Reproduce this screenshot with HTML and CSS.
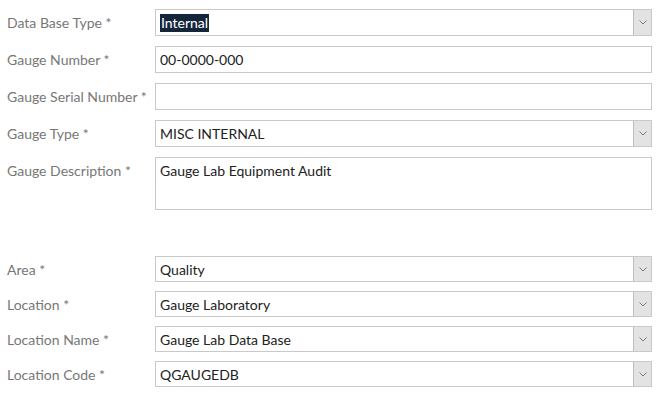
FILE: index.html
```html
<!DOCTYPE html>
<html lang="en">
  <head>
    <meta charset="UTF-8" />
    <meta name="viewport" content="width=device-width, initial-scale=1.0" />
    <title>Gauge Details</title>
    <link rel="stylesheet" href="styles.css">
  </head>
  <body>
    <div class="form">
      <div class="group">
        <div class="row">
          <label class="label">Data Base Type *</label>
          <div class="box">
            <span class="value"><span class="selected">Internal</span></span>
            <span class="arrow"><svg width="8" height="5" viewBox="0 0 8 5"><path d="M0.5 0.5 L4 4 L7.5 0.5" fill="none" stroke="#7a7a7a" stroke-width="1"/></svg></span>
          </div>
        </div>
        <div class="row">
          <label class="label">Gauge Number *</label>
          <div class="box"><span class="value">00-0000-000</span></div>
        </div>
        <div class="row">
          <label class="label">Gauge Serial Number *</label>
          <div class="box"><span class="value"></span></div>
        </div>
        <div class="row">
          <label class="label">Gauge Type *</label>
          <div class="box">
            <span class="value">MISC INTERNAL</span>
            <span class="arrow"><svg width="8" height="5" viewBox="0 0 8 5"><path d="M0.5 0.5 L4 4 L7.5 0.5" fill="none" stroke="#7a7a7a" stroke-width="1"/></svg></span>
          </div>
        </div>
        <div class="row tall">
          <label class="label">Gauge Description *</label>
          <div class="box area"><span class="value">Gauge Lab Equipment Audit</span></div>
        </div>
      </div>

      <div class="group lower">
        <div class="row">
          <label class="label">Area *</label>
          <div class="box">
            <span class="value">Quality</span>
            <span class="arrow"><svg width="8" height="5" viewBox="0 0 8 5"><path d="M0.5 0.5 L4 4 L7.5 0.5" fill="none" stroke="#7a7a7a" stroke-width="1"/></svg></span>
          </div>
        </div>
        <div class="row">
          <label class="label">Location *</label>
          <div class="box">
            <span class="value">Gauge Laboratory</span>
            <span class="arrow"><svg width="8" height="5" viewBox="0 0 8 5"><path d="M0.5 0.5 L4 4 L7.5 0.5" fill="none" stroke="#7a7a7a" stroke-width="1"/></svg></span>
          </div>
        </div>
        <div class="row">
          <label class="label">Location Name *</label>
          <div class="box">
            <span class="value">Gauge Lab Data Base</span>
            <span class="arrow"><svg width="8" height="5" viewBox="0 0 8 5"><path d="M0.5 0.5 L4 4 L7.5 0.5" fill="none" stroke="#7a7a7a" stroke-width="1"/></svg></span>
          </div>
        </div>
        <div class="row">
          <label class="label">Location Code *</label>
          <div class="box">
            <span class="value">QGAUGEDB</span>
            <span class="arrow"><svg width="8" height="5" viewBox="0 0 8 5"><path d="M0.5 0.5 L4 4 L7.5 0.5" fill="none" stroke="#7a7a7a" stroke-width="1"/></svg></span>
          </div>
        </div>
      </div>
    </div>
  </body>
</html>
```

FILE: styles.css
```css
body {
  margin: 0;
  background: #ffffff;
  font-family: Lato, "Open Sans", sans-serif;
  font-size: 14px;
}

.form {
  padding: 9px 9px 0 7px;
}

.group {
  display: flex;
  flex-direction: column;
  gap: 10px;
}

.group.lower {
  margin-top: 46px;
  gap: 9px;
}

.row {
  display: grid;
  grid-template-columns: 148px 497px;
  align-items: center;
}

.row.tall {
  align-items: start;
}

.row.tall .label {
  padding-top: 5px;
}

.label {
  color: #777777;
  white-space: nowrap;
}

.box {
  display: flex;
  height: 27px;
  box-sizing: border-box;
  border: 1px solid #c9c9c9;
  background: #ffffff;
}

.lower .box {
  height: 26px;
}

.box.area {
  height: 53px;
  align-items: flex-start;
}

.value {
  flex: 1;
  display: flex;
  align-items: center;
  padding-left: 4px;
  color: #222222;
}

.area .value {
  padding-top: 4px;
}

.selected {
  background: #16263a;
  color: #ffffff;
  padding: 0 1px;
  line-height: 18px;
}

.arrow {
  width: 17px;
  display: flex;
  align-items: center;
  justify-content: center;
  background: #e3e3e3;
  border-left: 1px solid #bdbdbd;
}
```
